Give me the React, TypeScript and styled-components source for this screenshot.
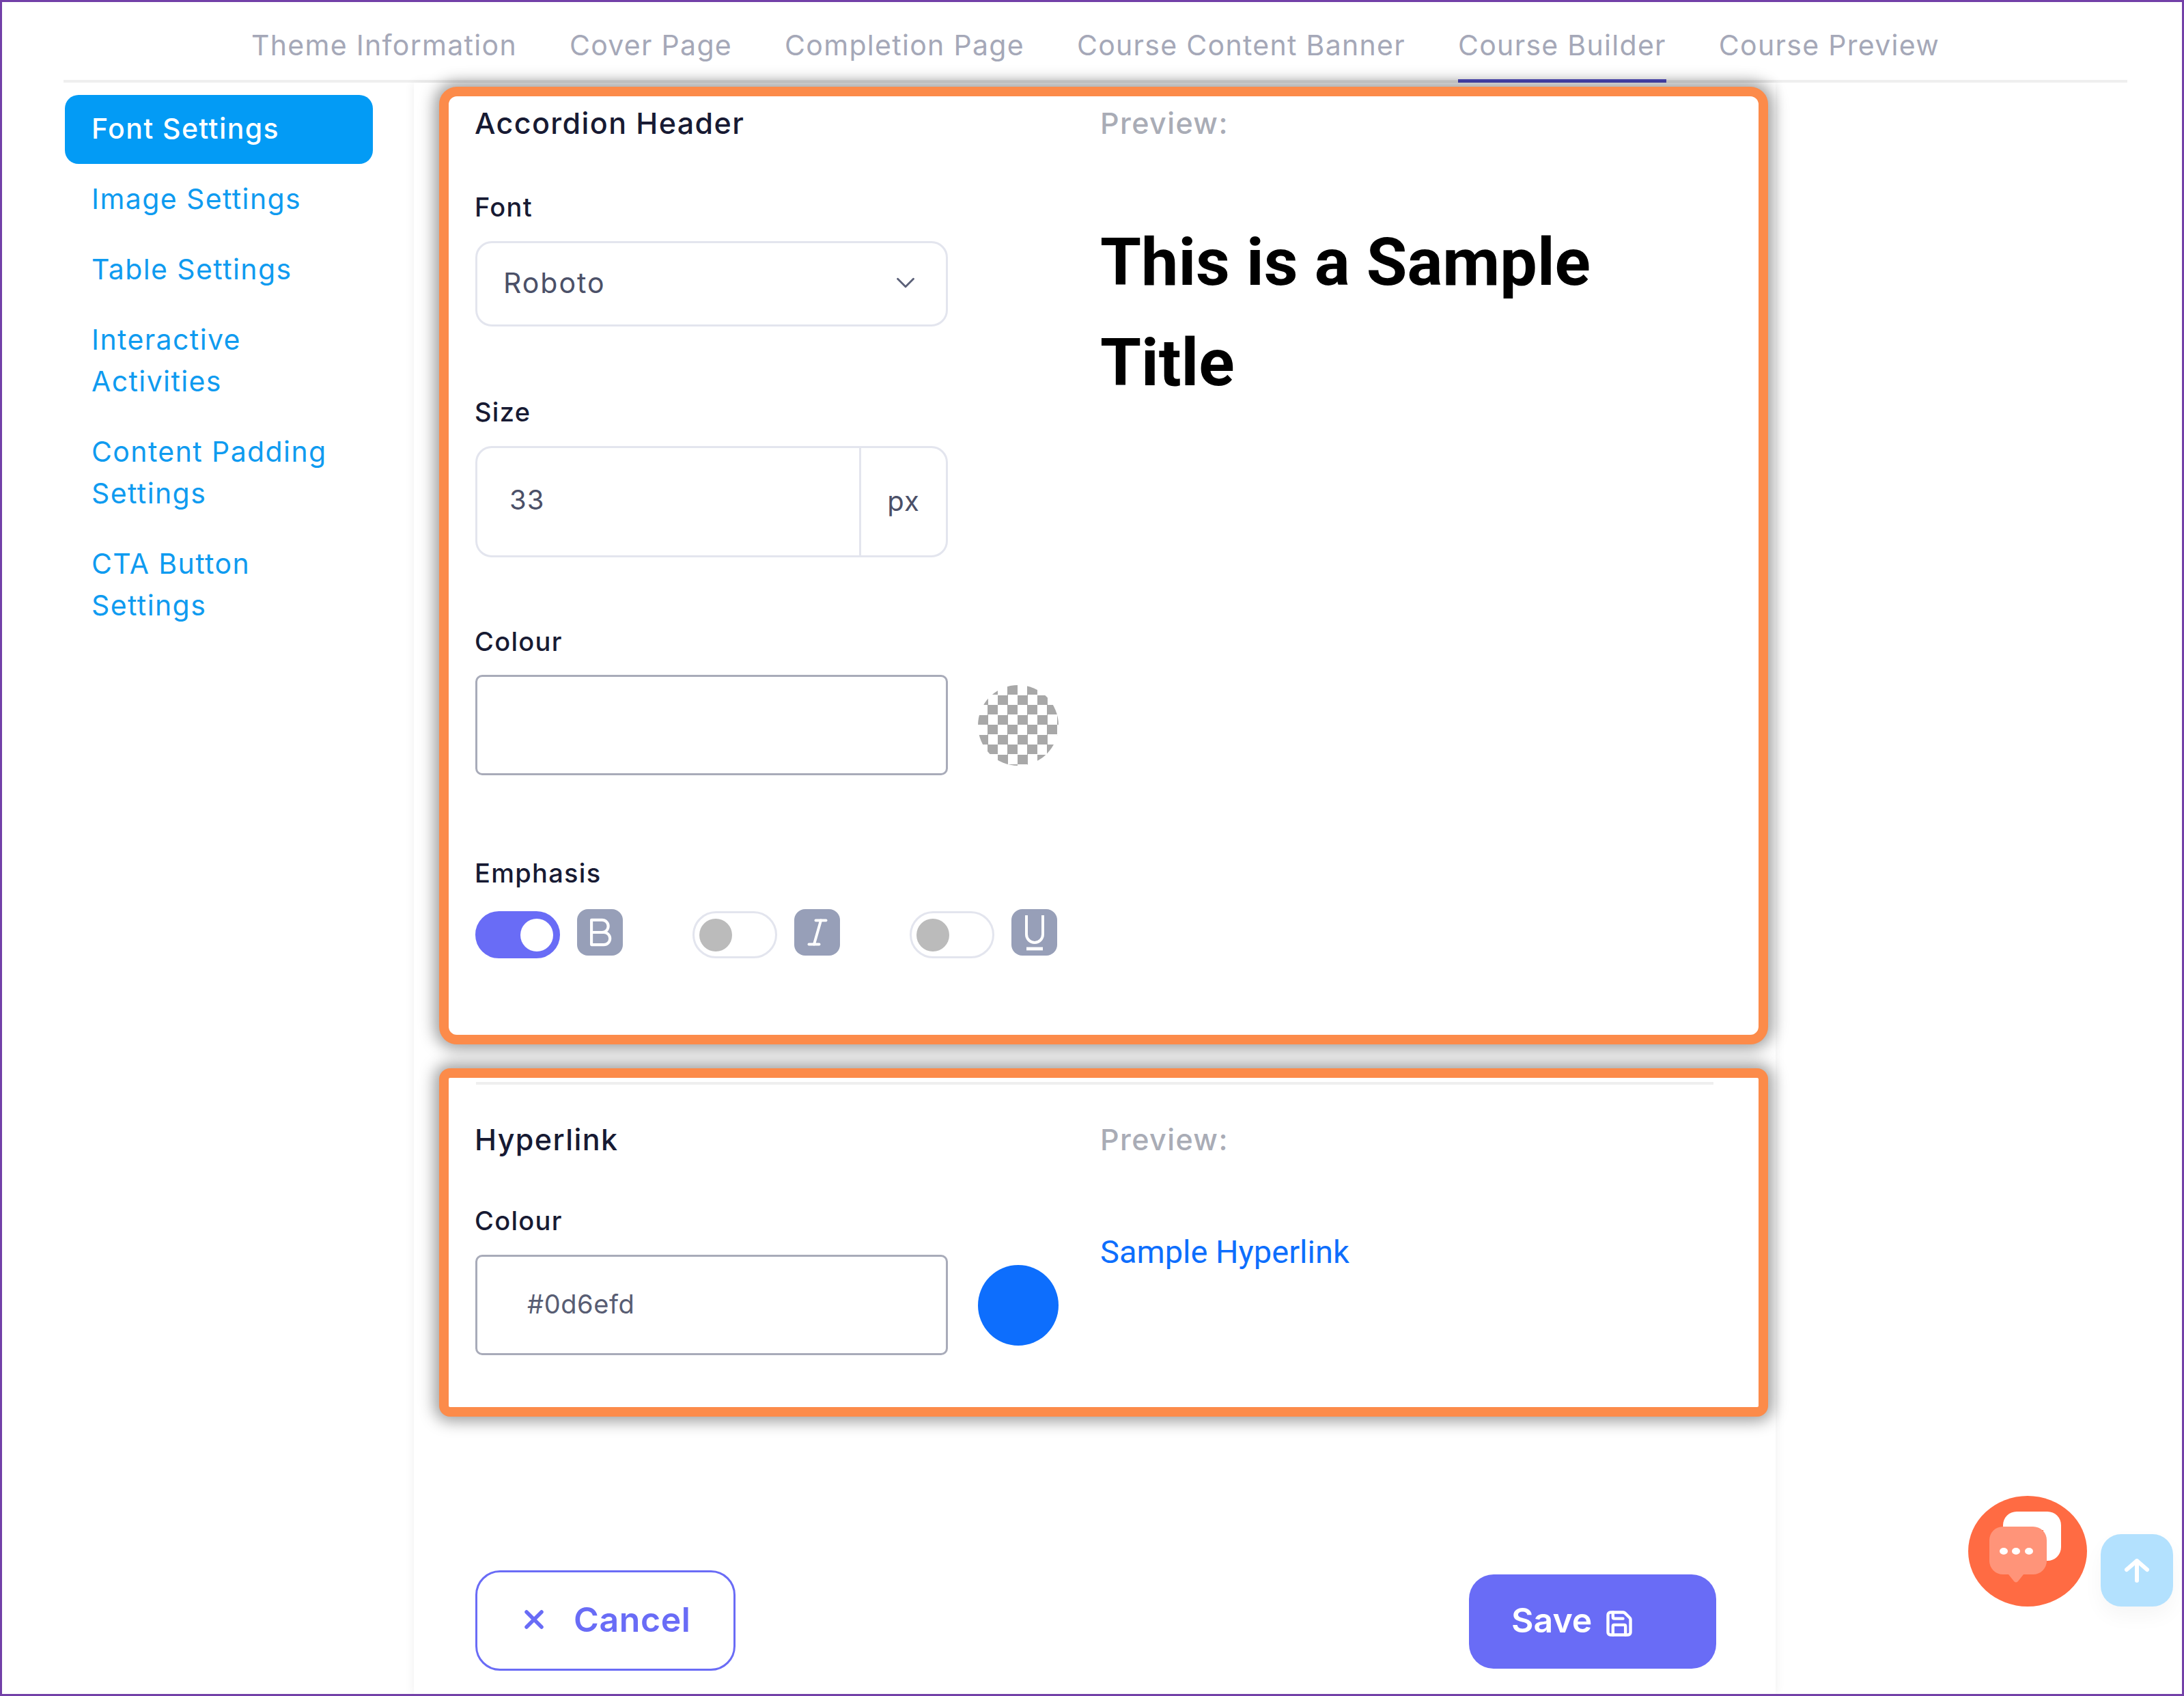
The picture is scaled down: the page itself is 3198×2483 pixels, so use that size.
import React from 'react';
import styled, { createGlobalStyle } from 'styled-components';
import { ChevronDown, Save, X } from 'lucide-react';
import { TbBold, TbItalic } from 'react-icons/tb';

const UI_FONT = `Inter, "Open Sans", "Liberation Sans", sans-serif`;

const GlobalStyle = createGlobalStyle`
	html, body {
		margin: 0;
		padding: 0;
		background: #fff;
	}
	* {
		box-sizing: border-box;
	}
`;

const Page = styled.div`
	position: relative;
	width: 3198px;
	height: 2483px;
	overflow: hidden;
	border: 3px solid #7340a8;
	background: #fff;
	font-family: ${UI_FONT};
`;

const TabBar = styled.nav`
	display: flex;
	justify-content: center;
	gap: 77px;
	height: 118px;
	margin: 0 80px 0 90px;
	border-bottom: 4px solid #efefef;
`;

const Tab = styled.div<{ $active?: boolean }>`
	height: 118px;
	padding-top: 38px;
	font-size: 41px;
	line-height: 50px;
	letter-spacing: 1.3px;
	color: #a5a8b8;
	border-bottom: 5px solid ${(p) => (p.$active ? '#4f4bc4' : 'transparent')};
`;

const Body = styled.div`
	display: flex;
	height: 2359px;
`;

const Sidebar = styled.aside`
	display: flex;
	flex-direction: column;
	gap: 2px;
	width: 451px;
	margin: 18px 60px 0 92px;
`;

const SideItem = styled.div<{ $active?: boolean }>`
	padding: 19px 39px 21px;
	border-radius: 20px;
	font-size: 41px;
	line-height: 61px;
	letter-spacing: 1.4px;
	color: ${(p) => (p.$active ? '#fff' : '#0f9bf0')};
	background: ${(p) => (p.$active ? '#039bf5' : 'transparent')};
	font-weight: ${(p) => (p.$active ? 500 : 400)};
`;

const Panel = styled.main`
	width: 1994px;
	padding: 6px 11px 0 37px;
	background: #fff;
	box-shadow: 0 0 14px rgba(0, 0, 0, 0.07);
`;

const Highlight = styled.section<{ $radius: number }>`
	border: 14px solid #fc8b4a;
	border-radius: ${(p) => p.$radius}px;
	background: #fff;
	box-shadow: 0 0 22px 7px rgba(0, 0, 0, 0.38);
`;

const AccordionBox = styled(Highlight)`
	display: grid;
	grid-template-columns: 916px 1fr;
	height: 1402px;
	padding: 9px 38px 0;
`;

const HyperlinkBox = styled(Highlight)`
	height: 510px;
	margin-top: 35px;
	padding: 6px 38px 0;
`;

const Divider = styled.div`
	height: 4px;
	margin: 0 28px 50px 2px;
	background: #efefef;
`;

const HyperlinkGrid = styled.div`
	display: grid;
	grid-template-columns: 916px 1fr;
`;

const Column = styled.div`
	display: flex;
	flex-direction: column;
`;

const Heading = styled.h3`
	margin: 0;
	font-size: 43px;
	line-height: 60px;
	font-weight: 500;
	letter-spacing: 1.4px;
	color: #171a33;
`;

const PreviewHeading = styled(Heading)`
	color: #a9acb6;
`;

const Label = styled.label<{ $top: number; $bottom?: number }>`
	display: block;
	margin: ${(p) => p.$top}px 0 ${(p) => p.$bottom ?? 25}px;
	font-size: 38px;
	line-height: 50px;
	font-weight: 500;
	letter-spacing: 1.3px;
	color: #171a33;
`;

const SelectBox = styled.div`
	display: flex;
	align-items: center;
	justify-content: space-between;
	width: 692px;
	height: 125px;
	margin-left: 1px;
	padding: 0 36px 3px 38px;
	border: 3px solid #e3e5ee;
	border-radius: 24px;
	font-size: 41px;
	letter-spacing: 2px;
	color: #4b5068;
`;

const SizeGroup = styled.div`
	display: flex;
	width: 692px;
	height: 163px;
	margin-left: 1px;
	border: 3px solid #e3e5ee;
	border-radius: 24px;
	font-size: 40px;
	letter-spacing: 1px;
	color: #4b5068;
`;

const SizeValue = styled.div`
	display: flex;
	align-items: center;
	flex: 1;
	padding-left: 47px;
	padding-bottom: 6px;
`;

const SizeUnit = styled.div`
	display: flex;
	align-items: center;
	justify-content: center;
	width: 127px;
	padding-bottom: 2px;
	border-left: 3px solid #e3e5ee;
`;

const ColourRow = styled.div`
	display: flex;
	align-items: center;
	gap: 44px;
	margin-left: 1px;
`;

const ColourInput = styled.div`
	display: flex;
	align-items: center;
	width: 692px;
	height: 147px;
	padding: 0 0 3px 73px;
	border: 3px solid #a8abb9;
	border-radius: 10px;
	font-size: 38px;
	letter-spacing: 0.6px;
	color: #585d73;
`;

const Swatch = styled.div<{ $color?: string }>`
	width: 118px;
	height: 118px;
	border-radius: 50%;
	background: ${(p) =>
		p.$color ?? 'repeating-conic-gradient(#a8a8a8 0 25%, #fff 0 50%) 0 0 / 29px 29px'};
`;

const EmphasisRow = styled.div`
	display: flex;
	margin: 2px 0 0 1px;
`;

const EmphasisItem = styled.div`
	display: flex;
	flex: 0 0 318px;
	gap: 25px;
`;

const Toggle = styled.div<{ $on?: boolean }>`
	display: flex;
	align-items: center;
	justify-content: ${(p) => (p.$on ? 'flex-end' : 'flex-start')};
	width: 124px;
	height: 69px;
	margin-top: 3px;
	padding: 0 7px;
	border: 3px solid ${(p) => (p.$on ? '#696cf6' : '#e3e5ee')};
	border-radius: 35px;
	background: ${(p) => (p.$on ? '#696cf6' : '#fff')};
`;

const Knob = styled.div<{ $on?: boolean }>`
	width: 48px;
	height: 48px;
	border-radius: 50%;
	background: ${(p) => (p.$on ? '#fff' : '#bbb')};
`;

const StyleBadge = styled.div`
	display: flex;
	align-items: center;
	justify-content: center;
	width: 67px;
	height: 68px;
	border-radius: 16px;
	background: #979fb8;
	color: #fff;
`;

const SampleTitle = styled.div`
	margin-top: 101px;
	width: 800px;
	font-family: Roboto, sans-serif;
	font-size: 97px;
	line-height: 147px;
	font-weight: 700;
	color: #000;
`;

const SampleLink = styled.a`
	margin-top: 105px;
	font-family: Roboto, sans-serif;
	font-size: 47px;
	line-height: 60px;
	color: #0d6efd;
`;

const Actions = styled.div`
	display: flex;
	justify-content: space-between;
	align-items: flex-start;
	margin: 225px 76px 0 53px;
`;

const CancelButton = styled.button`
	display: flex;
	align-items: center;
	gap: 36px;
	width: 381px;
	height: 147px;
	padding: 0 0 3px 61px;
	border: 3px solid #6a6cf6;
	border-radius: 36px;
	background: #fff;
	font-family: ${UI_FONT};
	font-size: 50px;
	font-weight: 600;
	letter-spacing: 0.6px;
	color: #696cf6;
`;

const SaveButton = styled.button`
	display: flex;
	align-items: center;
	gap: 18px;
	width: 362px;
	height: 138px;
	margin-top: 6px;
	padding: 0 0 5px 62px;
	border: 0;
	border-radius: 36px;
	background: #696cf6;
	font-family: ${UI_FONT};
	font-size: 50px;
	font-weight: 600;
	color: #fff;
`;

const SaveGlyph = styled(Save)`
	margin-top: 10px;
`;

const ChatBubble = styled.div`
	position: absolute;
	left: 2879px;
	top: 2187px;
	width: 174px;
	height: 162px;
	border-radius: 50%;
	background: #ff6b43;
`;

const BackToTop = styled.div`
	position: absolute;
	left: 3073px;
	top: 2243px;
	display: flex;
	align-items: center;
	justify-content: center;
	width: 106px;
	height: 106px;
	border-radius: 30px;
	background: #b3e1fe;
	box-shadow: 0 14px 30px rgba(0, 0, 0, 0.04);
	color: #fff;
`;

function UnderlineIcon() {
	return (
		<svg width="52" height="58" viewBox="0 0 26 29" fill="none" stroke="#fff" strokeWidth="2">
			<path d="M7 2v14a6 6 0 0 0 12 0V2" />
			<path d="M7 26.5h12" strokeWidth="2.4" />
		</svg>
	);
}

function ChatIcon() {
	return (
		<svg width="174" height="162" viewBox="0 0 174 162">
			<path d="M51 50v-7a20 20 0 0 1 20-20h45a20 20 0 0 1 20 20v32a20 20 0 0 1-20 20h-6V50Z" fill="#fff" />
			<path
				d="M51 45h44a20 20 0 0 1 20 20v30a20 20 0 0 1-20 20H81l-8 10q-3 3-6 0l-8-10h-8a20 20 0 0 1-20-20V65a20 20 0 0 1 20-20Z"
				fill="#ff9479"
			/>
			<ellipse cx="52" cy="81" rx="6" ry="5" fill="#fff" />
			<ellipse cx="70" cy="81" rx="6" ry="5" fill="#fff" />
			<ellipse cx="89" cy="81" rx="6" ry="5" fill="#fff" />
		</svg>
	);
}

const TABS = [
	'Theme Information',
	'Cover Page',
	'Completion Page',
	'Course Content Banner',
	'Course Builder',
	'Course Preview',
];

const SIDE_ITEMS = [
	'Font Settings',
	'Image Settings',
	'Table Settings',
	'Interactive Activities',
	'Content Padding Settings',
	'CTA Button Settings',
];

export default function App(): React.ReactElement {
	return (
		<Page>
			<GlobalStyle />
			<TabBar>
				{TABS.map((tab) => (
					<Tab key={tab} $active={tab === 'Course Builder'}>
						{tab}
					</Tab>
				))}
			</TabBar>
			<Body>
				<Sidebar>
					{SIDE_ITEMS.map((item, i) => (
						<SideItem key={item} $active={i === 0}>
							{item}
						</SideItem>
					))}
				</Sidebar>
				<Panel>
					<AccordionBox $radius={26}>
						<Column>
							<Heading>Accordion Header</Heading>
							<Label $top={68}>Font</Label>
							<SelectBox>
								Roboto
								<ChevronDown size={46} strokeWidth={1.5} color="#5b6078" />
							</SelectBox>
							<Label $top={100}>Size</Label>
							<SizeGroup>
								<SizeValue>33</SizeValue>
								<SizeUnit>px</SizeUnit>
							</SizeGroup>
							<Label $top={98} $bottom={24}>
								Colour
							</Label>
							<ColourRow>
								<ColourInput />
								<Swatch />
							</ColourRow>
							<Label $top={118} $bottom={26}>
								Emphasis
							</Label>
							<EmphasisRow>
								<EmphasisItem>
									<Toggle $on>
										<Knob $on />
									</Toggle>
									<StyleBadge>
										<TbBold size={62} strokeWidth={1.6} />
									</StyleBadge>
								</EmphasisItem>
								<EmphasisItem>
									<Toggle>
										<Knob />
									</Toggle>
									<StyleBadge>
										<TbItalic size={60} strokeWidth={1.6} />
									</StyleBadge>
								</EmphasisItem>
								<EmphasisItem>
									<Toggle>
										<Knob />
									</Toggle>
									<StyleBadge>
										<UnderlineIcon />
									</StyleBadge>
								</EmphasisItem>
							</EmphasisRow>
						</Column>
						<Column>
							<PreviewHeading>Preview:</PreviewHeading>
							<SampleTitle>This is a Sample Title</SampleTitle>
						</Column>
					</AccordionBox>
					<HyperlinkBox $radius={16}>
						<Divider />
						<HyperlinkGrid>
							<Column>
								<Heading>Hyperlink</Heading>
								<Label $top={64}>Colour</Label>
								<ColourRow>
									<ColourInput>#0d6efd</ColourInput>
									<Swatch $color="#0d6efd" />
								</ColourRow>
							</Column>
							<Column>
								<PreviewHeading>Preview:</PreviewHeading>
								<SampleLink>Sample Hyperlink</SampleLink>
							</Column>
						</HyperlinkGrid>
					</HyperlinkBox>
					<Actions>
						<CancelButton>
							<X size={44} strokeWidth={3} />
							Cancel
						</CancelButton>
						<SaveButton>
							Save
							<SaveGlyph size={44} strokeWidth={2.4} />
						</SaveButton>
					</Actions>
				</Panel>
			</Body>
			<ChatBubble>
				<ChatIcon />
			</ChatBubble>
			<BackToTop>
				<svg width="44" height="44" viewBox="0 0 44 44" fill="none" stroke="#fff" strokeWidth="6" strokeLinecap="round" strokeLinejoin="round">
					<path d="M22 37V8M7 21 22 8l15 13" />
				</svg>
			</BackToTop>
		</Page>
	);
}
